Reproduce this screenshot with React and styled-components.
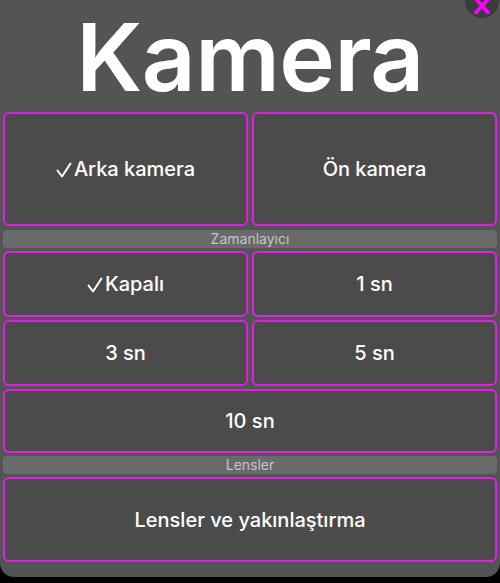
import React from 'react';
import styled, { createGlobalStyle } from 'styled-components';

const GlobalStyle = createGlobalStyle`
  html, body {
    margin: 0;
    padding: 0;
    background: #000;
    font-family: Inter, "Noto Sans", "Liberation Sans", sans-serif;
  }
`;

const Panel = styled.div`
  position: relative;
  width: 500px;
  height: 577px;
  box-sizing: border-box;
  background: #545454;
  border-radius: 0 0 14px 14px;
  padding: 0 3px;
  display: flex;
  flex-direction: column;
  overflow: hidden;
`;

const Title = styled.h1`
  margin: 0;
  height: 112px;
  text-align: center;
  color: #fff;
  font-size: 94px;
  font-weight: 600;
  letter-spacing: -0.5px;
  line-height: 114px;
`;

const CloseButton = styled.button`
  position: absolute;
  top: -16px;
  right: 1px;
  width: 34px;
  height: 34px;
  border-radius: 50%;
  border: none;
  background: #3b3b3b;
  padding: 0;
  display: flex;
  align-items: flex-end;
  justify-content: center;
`;

const Grid = styled.div`
  display: grid;
  grid-template-columns: 1fr 1fr;
  gap: 3px 4px;
  margin-bottom: ${p => p.$mb || 3}px;
`;

const Option = styled.button`
  height: ${p => p.$h}px;
  grid-column: ${p => (p.$wide ? '1 / span 2' : 'auto')};
  box-sizing: border-box;
  border: 2px solid #e01ee6;
  border-radius: 6px;
  background: #4b4b4b;
  color: #fff;
  font-family: inherit;
  font-size: 20px;
  font-weight: 500;
  display: flex;
  align-items: center;
  justify-content: center;
  padding: 0;
`;

const SectionLabel = styled.div`
  height: 18px;
  border-radius: 4px;
  background: #6a6a6a;
  color: #c4c4c4;
  font-size: 14px;
  line-height: 18px;
  text-align: center;
  margin-bottom: 3px;
`;

const CheckMark = styled.svg`
  width: 16px;
  height: 16px;
  margin-right: 2px;
  margin-top: 1px;
`;

const Label = ({ checked, children }) => (
  <>
    {checked && (
      <CheckMark viewBox="0 0 16 16">
        <path d="M1.5 8.5 L6 14.5 L14.5 1.5" fill="none" stroke="#fff" strokeWidth="2" strokeLinecap="round" strokeLinejoin="round" />
      </CheckMark>
    )}
    {children}
  </>
);

export default function App() {
  return (
    <>
      <GlobalStyle />
      <Panel>
        <CloseButton aria-label="Kapat">
          <svg width="24" height="18" viewBox="0 0 24 18">
            <path d="M4 -3 L18 12.5 M20 -3 L6 12.5" stroke="#ff00ff" strokeWidth="3.6" strokeLinecap="round" />
          </svg>
        </CloseButton>
        <Title>Kamera</Title>
        <Grid $mb={4}>
          <Option $h={114}><Label checked>Arka kamera</Label></Option>
          <Option $h={114}>Ön kamera</Option>
        </Grid>
        <SectionLabel>Zamanlayıcı</SectionLabel>
        <Grid>
          <Option $h={66}><Label checked>Kapalı</Label></Option>
          <Option $h={66}>1 sn</Option>
          <Option $h={66}>3 sn</Option>
          <Option $h={66}>5 sn</Option>
          <Option $h={64} $wide>10 sn</Option>
        </Grid>
        <SectionLabel>Lensler</SectionLabel>
        <Grid>
          <Option $h={85} $wide>Lensler ve yakınlaştırma</Option>
        </Grid>
      </Panel>
    </>
  );
}
